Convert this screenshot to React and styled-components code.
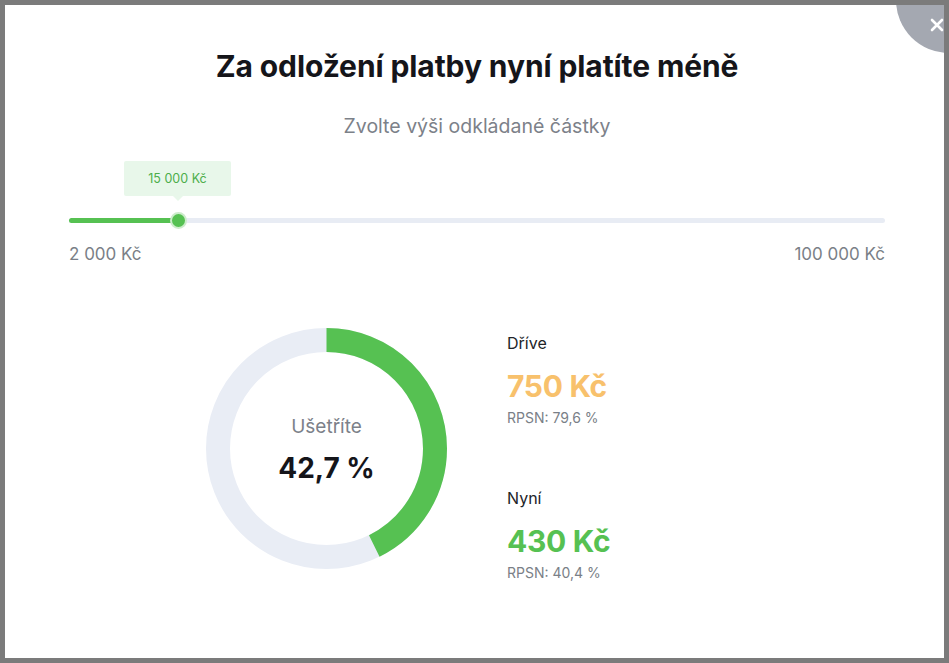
import React from "react";
import styled, { createGlobalStyle } from "styled-components";

const Global = createGlobalStyle`
  html, body { margin: 0; padding: 0; background: #fff; }
  body { font-family: Inter, "Noto Sans", sans-serif; }
  * { box-sizing: border-box; }
`;

const Frame = styled.div`
  position: relative;
  width: 949px;
  height: 663px;
  border: 5px solid #7b7b7b;
  background: #fff;
  overflow: hidden;
`;

const Close = styled.button`
  position: absolute;
  left: 891px;
  top: -58px;
  width: 106px;
  height: 106px;
  border-radius: 50%;
  border: none;
  padding: 0;
  background: #a4a8b1;
  cursor: pointer;
`;

const CloseIcon = styled.svg`
  position: absolute;
  left: 34px;
  top: 71px;
`;

const Content = styled.div`
  padding: 43px 59px 0 64px;
  display: flex;
  flex-direction: column;
`;

const Title = styled.h1`
  margin: 0;
  text-align: center;
  font-size: 30px;
  line-height: 36px;
  font-weight: 700;
  color: #15151a;
  letter-spacing: -0.1px;
`;

const Subtitle = styled.p`
  margin: 30px 0 0;
  text-align: center;
  font-size: 19.5px;
  line-height: 24px;
  font-weight: 400;
  color: #7c8189;
`;

const Slider = styled.div`
  position: relative;
  margin-top: 23px;
  height: 70px;
`;

const Track = styled.div`
  position: absolute;
  left: 0;
  right: 0;
  top: 57px;
  height: 5px;
  border-radius: 3px;
  background: #e8ecf4;
`;

const Fill = styled.div`
  position: absolute;
  left: 0;
  top: 0;
  bottom: 0;
  border-radius: 3px;
  background: #56c152;
`;

const Thumb = styled.div`
  position: absolute;
  top: 51px;
  width: 17px;
  height: 17px;
  margin-left: -8.5px;
  border-radius: 50%;
  background: #56c152;
  border: 2px solid #cdeccb;
`;

const Tip = styled.div`
  position: absolute;
  top: 0;
  width: 107px;
  height: 35px;
  margin-left: -54px;
  background: #e8f7ea;
  color: #4cae4b;
  font-size: 12.5px;
  display: flex;
  align-items: center;
  justify-content: center;
  border-radius: 2px;
  &::after {
    content: "";
    position: absolute;
    left: 50%;
    bottom: -5px;
    margin-left: -5px;
    border-left: 5px solid transparent;
    border-right: 5px solid transparent;
    border-top: 5px solid #e8f7ea;
  }
`;

const Limits = styled.div`
  display: flex;
  justify-content: space-between;
  margin-top: 13px;
  font-size: 17px;
  line-height: 20px;
  color: #7a7f87;
`;

const Result = styled.div`
  display: flex;
  align-items: flex-start;
  gap: 60px;
  margin-top: 64px;
  padding-left: 137px;
`;

const Donut = styled.div`
  position: relative;
  width: 241px;
  height: 241px;
  flex: none;
`;

const DonutCenter = styled.div`
  position: absolute;
  inset: 0;
  display: flex;
  flex-direction: column;
  align-items: center;
  justify-content: center;
  padding-top: 3px;
`;

const SaveLabel = styled.div`
  font-size: 19px;
  line-height: 24px;
  color: #7c8189;
`;

const SaveValue = styled.div`
  margin-top: 11px;
  font-size: 28px;
  line-height: 36px;
  font-weight: 700;
  color: #15151a;
`;

const Stats = styled.div`
  display: flex;
  flex-direction: column;
  padding-top: 5px;
`;

const Block = styled.div`
  display: flex;
  flex-direction: column;
  & + & { margin-top: 62px; }
`;

const Label = styled.div`
  font-size: 16px;
  line-height: 20px;
  color: #222428;
`;

const Amount = styled.div`
  margin-top: 15px;
  font-size: 30px;
  line-height: 36px;
  font-weight: 700;
  color: ${(p) => p.$color};
  letter-spacing: -0.3px;
`;

const Rate = styled.div`
  margin-top: 6px;
  font-size: 14px;
  line-height: 16px;
  color: #7a7f87;
`;

function Ring({ pct }) {
  const r = 108.5;
  const c = 2 * Math.PI * r;
  return (
    <svg width="241" height="241" viewBox="0 0 241 241">
      <circle cx="120.5" cy="120.5" r={r} fill="none" stroke="#e9edf5" strokeWidth="24" />
      <circle
        cx="120.5"
        cy="120.5"
        r={r}
        fill="none"
        stroke="#56c152"
        strokeWidth="24"
        strokeDasharray={`${(c * pct) / 100} ${c}`}
        transform="rotate(-90 120.5 120.5)"
      />
    </svg>
  );
}

export default function App() {
  const pos = 109; // px from slider start
  return (
    <>
      <Global />
      <Frame>
        <Close aria-label="Zavřít">
          <CloseIcon width="14" height="14" viewBox="0 0 14 14">
            <path d="M2 2 L12 12 M12 2 L2 12" stroke="#fff" strokeWidth="2.6" strokeLinecap="round" />
          </CloseIcon>
        </Close>
        <Content>
          <Title>Za odložení platby nyní platíte méně</Title>
          <Subtitle>Zvolte výši odkládané částky</Subtitle>
          <Slider>
            <Tip style={{ left: pos }}>15 000 Kč</Tip>
            <Track>
              <Fill style={{ width: pos }} />
            </Track>
            <Thumb style={{ left: pos }} />
          </Slider>
          <Limits>
            <span>2 000 Kč</span>
            <span>100 000 Kč</span>
          </Limits>
          <Result>
            <Donut>
              <Ring pct={42.7} />
              <DonutCenter>
                <SaveLabel>Ušetříte</SaveLabel>
                <SaveValue>42,7 %</SaveValue>
              </DonutCenter>
            </Donut>
            <Stats>
              <Block>
                <Label>Dříve</Label>
                <Amount $color="#f8c16c">750 Kč</Amount>
                <Rate>RPSN: 79,6 %</Rate>
              </Block>
              <Block>
                <Label>Nyní</Label>
                <Amount $color="#56c152">430 Kč</Amount>
                <Rate>RPSN: 40,4 %</Rate>
              </Block>
            </Stats>
          </Result>
        </Content>
      </Frame>
    </>
  );
}
